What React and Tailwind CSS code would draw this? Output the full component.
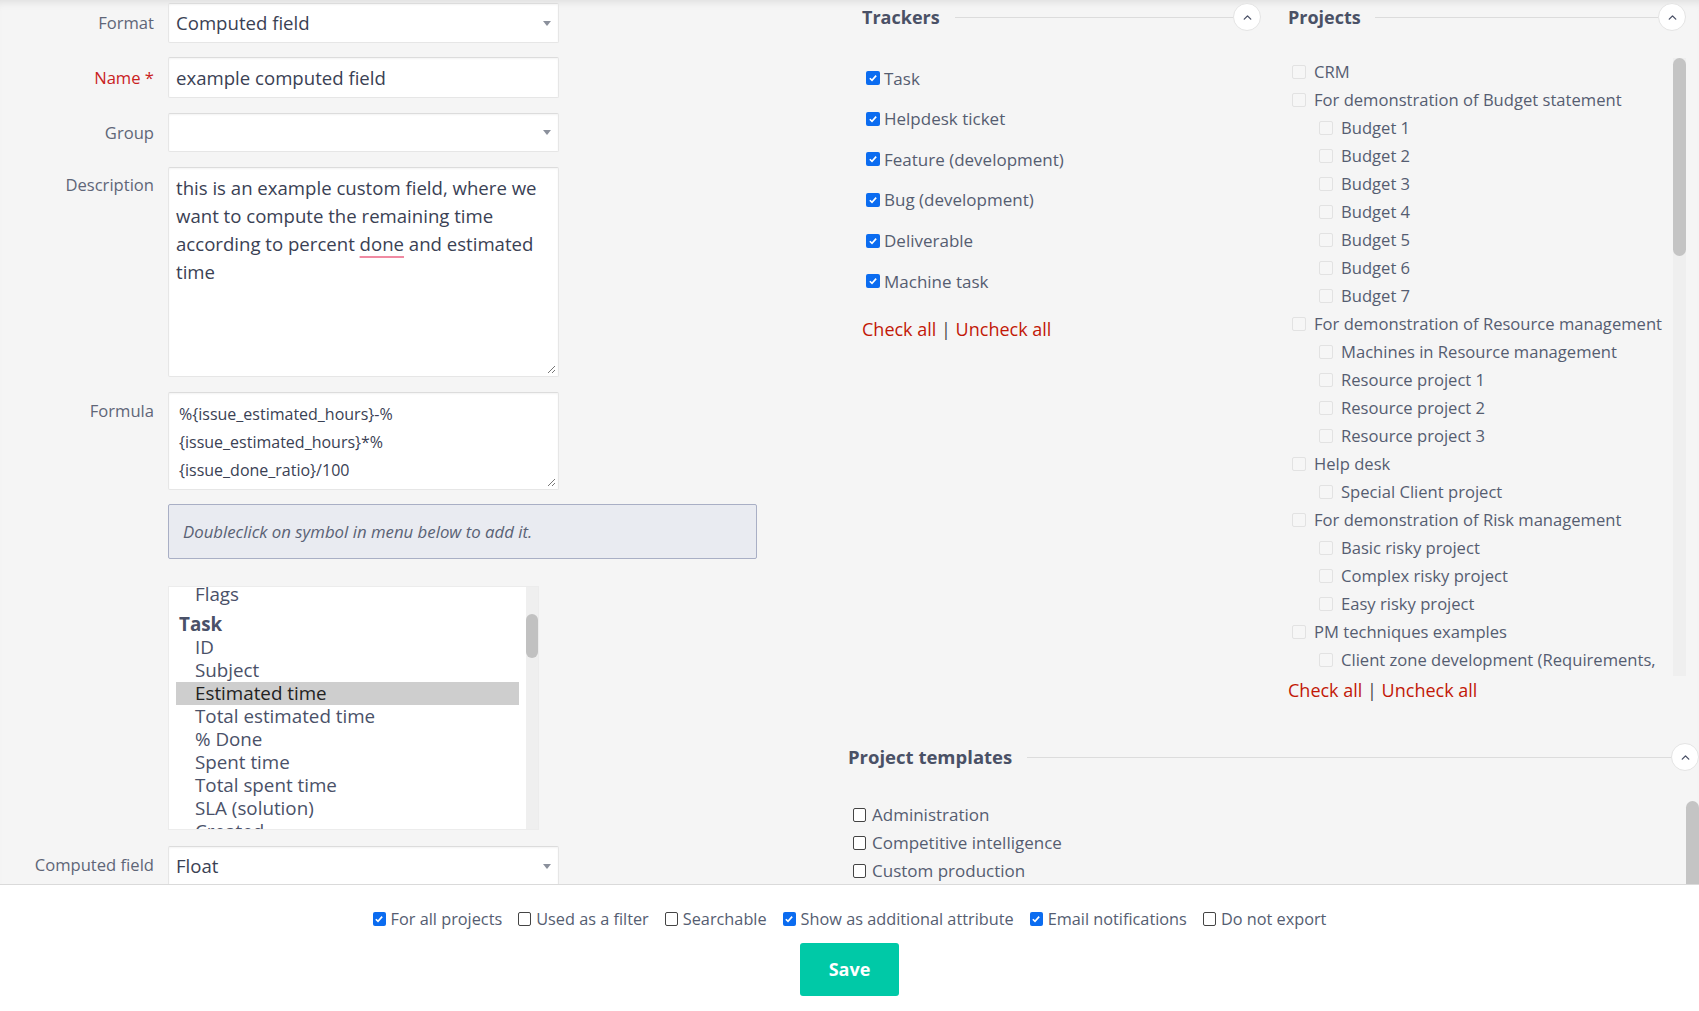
import { ChevronUp } from 'lucide-react';

const trackers = ['Task', 'Helpdesk ticket', 'Feature (development)', 'Bug (development)', 'Deliverable', 'Machine task'];

const projects = [
  { name: 'CRM', level: 0 },
  { name: 'For demonstration of Budget statement', level: 0 },
  { name: 'Budget 1', level: 1 },
  { name: 'Budget 2', level: 1 },
  { name: 'Budget 3', level: 1 },
  { name: 'Budget 4', level: 1 },
  { name: 'Budget 5', level: 1 },
  { name: 'Budget 6', level: 1 },
  { name: 'Budget 7', level: 1 },
  { name: 'For demonstration of Resource management', level: 0 },
  { name: 'Machines in Resource management', level: 1 },
  { name: 'Resource project 1', level: 1 },
  { name: 'Resource project 2', level: 1 },
  { name: 'Resource project 3', level: 1 },
  { name: 'Help desk', level: 0 },
  { name: 'Special Client project', level: 1 },
  { name: 'For demonstration of Risk management', level: 0 },
  { name: 'Basic risky project', level: 1 },
  { name: 'Complex risky project', level: 1 },
  { name: 'Easy risky project', level: 1 },
  { name: 'PM techniques examples', level: 0 },
  { name: 'Client zone development (Requirements,', level: 1 },
];

const templates = ['Administration', 'Competitive intelligence', 'Custom production', 'Events'];

const taskFields = ['ID', 'Subject', 'Estimated time', 'Total estimated time', '% Done', 'Spent time', 'Total spent time', 'SLA (solution)', 'Created'];

function Checked({ size = 'w-[14px] h-[14px]' }) {
  return (
    <span className={`${size} shrink-0 rounded-[2px] bg-[#0b6cf0] flex items-center justify-center`}>
      <svg viewBox="0 0 12 12" className="w-[10px] h-[10px]">
        <path d="M2.2 6.3 L4.8 8.8 L9.8 3.2" fill="none" stroke="white" strokeWidth="2" />
      </svg>
    </span>
  );
}

function Unchecked() {
  return <span className="w-[13px] h-[14px] shrink-0 rounded-[2px] border border-[#444] bg-white" />;
}

function Faint() {
  return <span className="w-[14px] h-[14px] shrink-0 rounded-[2px] border border-[#e2e2e2] bg-[#f6f6f6]" />;
}

function SelectArrow() {
  return (
    <svg viewBox="0 0 8 5" className="w-[8px] h-[5px]">
      <polygon points="0,0 8,0 4,5" fill="#8b909c" />
    </svg>
  );
}

function Grip() {
  return (
    <svg viewBox="0 0 10 10" className="absolute right-[2px] bottom-[2px] w-[10px] h-[10px]">
      <path d="M9 2 L2 9 M9 6 L6 9" stroke="#777" strokeWidth="1" />
    </svg>
  );
}

function SectionHead({ title, size = 'text-[18px]', gap = 'ml-[15px]' }) {
  return (
    <div className="flex items-center h-[28px]">
      <h3 className={`${size} font-bold text-[#4a5166] leading-none`}>{title}</h3>
      <div className={`flex-1 h-px bg-[#dcdcdc] ${gap}`} />
      <button className="w-[28px] h-[28px] shrink-0 rounded-full border border-[#e4e4e4] bg-white flex items-center justify-center">
        <ChevronUp size={13} strokeWidth={2.5} className="text-[#4a5166]" />
      </button>
    </div>
  );
}

function Row({ label, children, className = '', labelClass = 'items-center', labelTone = 'text-[#5f6678]' }) {
  return (
    <div className={`flex ${labelClass} ${className}`}>
      <div className={`w-[154px] shrink-0 text-right text-[16.6px] leading-[20px] ${labelTone}`}>{label}</div>
      <div className="ml-[14px]">{children}</div>
    </div>
  );
}

const inputBox = 'w-[391px] bg-white border border-[#e6e6e6] border-t-[#dcdcdc] rounded-[2px] shadow-[inset_0_1px_2px_rgba(0,0,0,0.05)]';

function CheckAll() {
  return (
    <div className="text-[18px] leading-[24px]">
      <span className="text-[#c21807]">Check all</span>
      <span className="text-[#4a4a4a]"> | </span>
      <span className="text-[#c21807]">Uncheck all</span>
    </div>
  );
}

export default function App() {
  return (
    <div className="w-[1699px] h-[1011px] flex flex-col overflow-hidden bg-[#f5f5f5] font-['Open_Sans',sans-serif]">
      <main className="h-[884px] shrink-0 flex overflow-hidden pt-[3px] shadow-[inset_0_8px_8px_-6px_rgba(0,0,0,0.10)]">
        {/* Left form */}
        <div className="w-[848px] shrink-0">
          <Row label="Format">
            <div className={`${inputBox} h-[40px] flex items-center justify-between pl-[7px] pr-[7px]`}>
              <span className="text-[18.6px] text-[#3a4154]">Computed field</span>
              <SelectArrow />
            </div>
          </Row>
          <Row label="Name *" className="mt-[14px]" labelTone="text-[#c9211e]">
            <div className={`${inputBox} h-[41px] flex items-center pl-[7px]`}>
              <span className="text-[18.6px] text-[#3a4154]">example computed field</span>
            </div>
          </Row>
          <Row label="Group" className="mt-[15px]">
            <div className={`${inputBox} h-[39px] flex items-center justify-end pr-[7px]`}>
              <SelectArrow />
            </div>
          </Row>
          <Row label={<span className="block pt-[8px]">Description</span>} className="mt-[15px]" labelClass="items-start">
            <div className={`${inputBox} relative h-[210px] px-[7px] pt-[6px] text-[18.6px] leading-[28px] text-[#3a4154]`}>
              this is an example custom field, where we want to compute the remaining time according to percent{' '}
              <span className="underline decoration-[#f08aa2] decoration-2 underline-offset-[5px]">done</span> and estimated time
              <Grip />
            </div>
          </Row>
          <Row label={<span className="block pt-[9px]">Formula</span>} className="mt-[15px]" labelClass="items-start">
            <div className={`${inputBox} relative h-[98px] pl-[10px] pr-[8px] pt-[7px] text-[16px] leading-[28px] text-[#3a4154]`}>
              %{'{'}issue_estimated_hours{'}'}-%
              <br />
              {'{'}issue_estimated_hours{'}'}*%
              <br />
              {'{'}issue_done_ratio{'}'}/100
              <Grip />
            </div>
          </Row>
          <div className="ml-[168px] mt-[14px] w-[589px] h-[55px] rounded-[2px] border border-[#a9afc5] bg-[#e9ebf1] flex items-center pl-[14px]">
            <span className="italic text-[16.8px] text-[#5a6275]">Doubleclick on symbol in menu below to add it.</span>
          </div>
          <div className="ml-[168px] mt-[27px] w-[371px] h-[244px] flex bg-white border border-[#ececec]">
            <div className="flex-1 overflow-hidden px-[7px] text-[18.8px] text-[#4a5168]">
              <div className="-mt-[4px] h-[23px] leading-[23px] pl-[19px]">Flags</div>
              <div className="h-[30px] pt-[7px] leading-[23px] pl-[3px] font-bold">Task</div>
              {taskFields.map((f) => (
                <div
                  key={f}
                  className={`h-[23px] leading-[23px] pl-[19px] whitespace-nowrap ${f === 'Estimated time' ? 'bg-[#cecece] text-[#222]' : ''}`}
                >
                  {f}
                </div>
              ))}
            </div>
            <div className="w-[12px] shrink-0 bg-[#efefef] pt-[27px]">
              <div className="h-[44px] rounded-full bg-[#c1c1c1]" />
            </div>
          </div>
          <Row
            label={<span className="block pt-[6px] leading-[26px]">Computed field<br />type</span>}
            className="mt-[16px]"
            labelClass="items-start"
          >
            <div className={`${inputBox} h-[40px] flex items-center justify-between pl-[7px] pr-[7px]`}>
              <span className="text-[18.6px] text-[#3a4154]">Float</span>
              <SelectArrow />
            </div>
          </Row>
        </div>

        {/* Right side */}
        <div className="flex-1 flex flex-col min-w-0">
          <div className="h-[740px] shrink-0 flex">
            {/* Trackers */}
            <div className="w-[426px] shrink-0 pl-[14px] pr-[13px]">
              <SectionHead title="Trackers" />
              <div className="mt-[27px] pl-[4px]">
                {trackers.map((t) => (
                  <div key={t} className="h-[40.6px] flex items-center gap-[4px]">
                    <Checked />
                    <span className="text-[17px] text-[#555d71]">{t}</span>
                  </div>
                ))}
              </div>
              <div className="mt-[15px]">
                <CheckAll />
              </div>
            </div>
            {/* Projects */}
            <div className="flex-1 pl-[14px] pr-[13px]">
              <SectionHead title="Projects" gap="ml-[14px]" />
              <div className="mt-[27px] h-[618px] flex overflow-hidden">
                <div className="flex-1 overflow-hidden">
                  {projects.map((p) => (
                    <div
                      key={p.name}
                      className={`h-[28px] flex items-center gap-[8px] whitespace-nowrap ${p.level ? 'pl-[31px]' : 'pl-[4px]'}`}
                    >
                      <Faint />
                      <span className="text-[16.6px] text-[#555d71]">{p.name}</span>
                    </div>
                  ))}
                </div>
                <div className="w-[13px] shrink-0 bg-[#efefef]">
                  <div className="h-[198px] rounded-full bg-[#c4c4c4]" />
                </div>
              </div>
              <div className="mt-[2px]">
                <CheckAll />
              </div>
            </div>
          </div>

          {/* Project templates */}
          <div>
            <SectionHead title="Project templates" size="text-[18.5px]" />
            <div className="mt-[30px] flex">
              <div className="flex-1 pl-[5px]">
                {templates.map((t) => (
                  <div key={t} className="h-[28px] flex items-center gap-[6px]">
                    <Unchecked />
                    <span className="text-[17px] text-[#555d71]">{t}</span>
                  </div>
                ))}
              </div>
              <div className="w-[13px] shrink-0">
                <div className="h-[200px] rounded-full bg-[#c4c4c4]" />
              </div>
            </div>
          </div>
        </div>
      </main>

      <footer className="flex-1 bg-white border-t border-[#dadada] flex flex-col items-center">
        <div className="mt-[24px] h-[20px] flex items-center gap-[16px] text-[16.3px] text-[#555d71]">
          <label className="flex items-center gap-[5px]"><Checked size="w-[13px] h-[14px]" />For all projects</label>
          <label className="flex items-center gap-[5px]"><Unchecked />Used as a filter</label>
          <label className="flex items-center gap-[5px]"><Unchecked />Searchable</label>
          <label className="flex items-center gap-[5px]"><Checked size="w-[13px] h-[14px]" />Show as additional attribute</label>
          <label className="flex items-center gap-[5px]"><Checked size="w-[13px] h-[14px]" />Email notifications</label>
          <label className="flex items-center gap-[5px]"><Unchecked />Do not export</label>
        </div>
        <button className="mt-[14px] w-[99px] h-[53px] rounded-[3px] bg-[#00c9a7] text-white text-[18px] font-bold">Save</button>
      </footer>
    </div>
  );
}
